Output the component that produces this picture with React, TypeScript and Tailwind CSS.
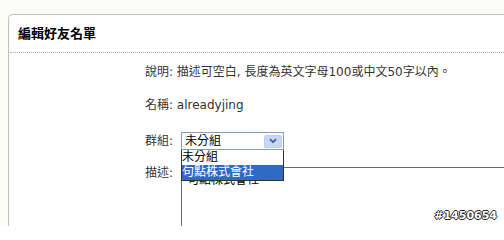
import React from 'react';

const font = "[font-family:'DejaVu_Sans','Noto_Sans_CJK_TC',sans-serif]";

export default function App() {
  return (
    <div className={`relative h-[226px] w-[504px] overflow-hidden bg-[#fbfcf6] pl-[8px] pt-[14px] ${font}`}>
      <div className="h-[212px] rounded-tl-[5px] border-l border-t border-[#b9c6b4] bg-white">
        {/* title */}
        <div className="ml-[1px] flex h-[38px] items-center border-b border-dotted border-[#b0b0b0] pl-[8px] pt-[1px]">
          <h2 className="text-[13px] font-bold leading-4 text-black">編輯好友名單</h2>
        </div>

        <div className="pl-[136px] text-[12px] leading-4 text-[#333]">
          <p className="mt-[11px]">說明: 描述可空白, 長度為英文字母100或中文50字以內。</p>
          <p className="mt-[17px]">名稱: alreadyjing</p>

          {/* group select */}
          <div className="mt-[19px] flex h-[18px] items-center">
            <span className="w-[36px] shrink-0">群組:</span>
            <div className="relative h-[18px] w-[103px]">
              <div className="flex h-[18px] items-center justify-between border border-[#7f9db9] bg-white pl-[3px] pr-[1px] text-black">
                <span>未分組</span>
                <span className="flex h-[13px] w-[18px] items-center justify-center rounded-[2px] border border-[#b9cdf6] bg-[#c6d6fa]">
                  <svg width="8" height="6" viewBox="0 0 8 6">
                    <path d="M1 1.2 L4 4.2 L7 1.2" fill="none" stroke="#4d6185" strokeWidth="1.8" />
                  </svg>
                </span>
              </div>
              {/* open list */}
              <div className="absolute left-0 top-[18px] z-10 w-[103px] border border-t-0 border-[#333] bg-white text-black">
                <div className="h-[15px] leading-[15px]">未分組</div>
                <div className="h-[15px] bg-[#316ac5] leading-[15px] text-white">句點株式會社</div>
              </div>
            </div>
          </div>

          {/* description */}
          <div className="mt-[15px] flex items-start">
            <span className="w-[36px] shrink-0">描述:</span>
            <div className="mt-[2px] h-[80px] w-[340px] shrink-0 border-l border-t border-[#6b6b6b] pl-[5px] pt-[4px] text-black">
              句點株式會社
            </div>
          </div>
        </div>
      </div>

      <span className="absolute bottom-[4px] right-[7px] text-[11px] font-bold leading-3 text-white [text-shadow:1px_0_#222,-1px_0_#222,0_1px_#222,0_-1px_#222]">
        #1450654
      </span>
    </div>
  );
}
